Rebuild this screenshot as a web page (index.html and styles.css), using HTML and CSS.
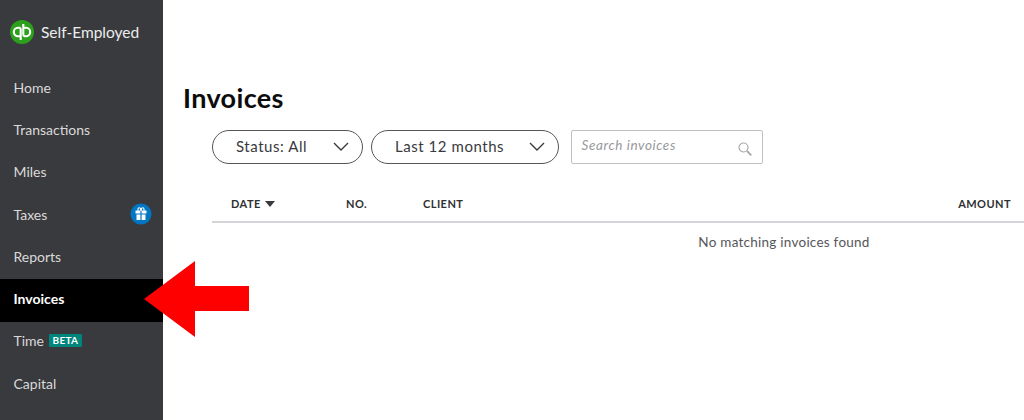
FILE: index.html
```html
<!DOCTYPE html>
<html lang="en">
<head>
    <meta charset="UTF-8">
    <title>Invoices</title>
    <link rel="stylesheet" href="styles.css">
</head>
<body>
    <div class="sidebar">
        <div class="brand">
            <svg class="brand-logo" width="24" height="24" viewBox="0 0 24 24">
                <circle cx="12" cy="12" r="12" fill="#2ca01c"/>
                <g fill="none" stroke="#fff" stroke-width="2.1">
                    <path d="M10.7 16.2H8a4.2 4.2 0 0 1 0-8.4h1.3a1.4 1.4 0 0 1 1.4 1.4V20"/>
                    <path d="M13.3 7.8H16a4.2 4.2 0 0 1 0 8.4h-1.3a1.4 1.4 0 0 1-1.4-1.4V4"/>
                </g>
            </svg>
            <span>Self-Employed</span>
        </div>
        <ul class="nav">
            <li class="nav-item">Home</li>
            <li class="nav-item">Transactions</li>
            <li class="nav-item">Miles</li>
            <li class="nav-item">Taxes
                <svg class="gift" width="22" height="22" viewBox="0 0 22 22">
                    <circle cx="11" cy="11" r="10.5" fill="#0077c5"/>
                    <path d="M5.5 7.6h11v3H5.5zM6.5 11.6h9v5.4h-9z" fill="#fff"/>
                    <path d="M11 7v10.5" stroke="#0077c5" stroke-width="1.2"/>
                    <path d="M8 7.8V6a1.3 1.3 0 0 1 2.6 0v1.8M11.4 7.8V6A1.3 1.3 0 0 1 14 6v1.8" fill="none" stroke="#fff" stroke-width="1.1"/>
                </svg>
            </li>
            <li class="nav-item">Reports</li>
            <li class="nav-item active">Invoices</li>
            <li class="nav-item">Time <span class="beta">BETA</span></li>
            <li class="nav-item">Capital</li>
        </ul>
    </div>

    <div class="main">
        <h1 class="title">Invoices</h1>
        <div class="filters">
            <div class="pill pill-status">
                <span>Status: All</span>
                <svg width="16" height="9" viewBox="0 0 16 9"><path d="M1 1l7 7 7-7" fill="none" stroke="#393a3d" stroke-width="1.4"/></svg>
            </div>
            <div class="pill pill-range">
                <span>Last 12 months</span>
                <svg width="16" height="9" viewBox="0 0 16 9"><path d="M1 1l7 7 7-7" fill="none" stroke="#393a3d" stroke-width="1.4"/></svg>
            </div>
            <div class="search">
                <span>Search invoices</span>
                <svg class="search-icon" width="14" height="14" viewBox="0 0 14 14">
                    <circle cx="5.5" cy="5.5" r="4.5" fill="none" stroke="#a8a9ab" stroke-width="1.2"/>
                    <path d="M9 9l4.3 4.3" stroke="#a8a9ab" stroke-width="1.8"/>
                </svg>
            </div>
        </div>
        <div class="table-head">
            <span class="col-date">DATE <i class="sort"></i></span>
            <span class="col-no">NO.</span>
            <span class="col-client">CLIENT</span>
            <span class="col-amount">AMOUNT</span>
        </div>
        <div class="empty">No matching invoices found</div>
    </div>

    <!-- red arrow lies over the sidebar and the page -->
    <svg class="arrow" width="105" height="76" viewBox="0 0 105 76">
        <path d="M0 38L51 0V25H105V50H51V76z" fill="#fe0000"/>
    </svg>
</body>
</html>
```

FILE: styles.css
```css
html, body {
    height: 100%;
}
body {
    display: flex;
    margin: 0;
    overflow: hidden;
    background-color: #fff;
    font-family: "Lato", "Liberation Sans", sans-serif;
    color: #393a3d;
}
.sidebar {
    flex: 0 0 163px;
    background-color: #393a3d;
    color: #d9d9da;
}
.brand {
    display: flex;
    align-items: center;
    gap: 7px;
    height: 24px;
    padding: 20px 0 0 10px;
    font-size: 15.5px;
    color: #eceded;
}
.nav {
    list-style: none;
    margin: 0;
    padding: 24px 0 0;
}
.nav-item {
    display: flex;
    align-items: center;
    box-sizing: border-box;
    height: 42.3px;
    padding: 0 11px 4px 13.5px;
    font-size: 14px;
}
.nav-item.active {
    background-color: #000;
    color: #fff;
    font-weight: 700;
}
.gift {
    margin: -1px 0 0 auto;
}
.beta {
    margin-left: 5px;
    padding: 0 3.5px;
    height: 13px;
    line-height: 13px;
    background-color: #00867d;
    color: #fff;
    font-size: 10px;
    font-weight: 700;
    letter-spacing: 0.3px;
    border-radius: 1px;
}
.main {
    flex: 1;
    min-width: 0;
    padding-top: 82px;
}
.title {
    margin: 0 0 16px 20px;
    height: 32px;
    line-height: 32px;
    font-size: 27px;
    font-weight: 700;
    color: #0c0c0d;
    letter-spacing: 0.35px;
}
.filters {
    display: flex;
    margin-left: 49px;
    height: 34px;
}
.pill {
    display: flex;
    align-items: center;
    justify-content: space-between;
    box-sizing: border-box;
    border: 1.5px solid #55565a;
    border-radius: 17px;
    padding: 0 13px 0 23px;
    font-size: 15px;
    letter-spacing: 0.55px;
}
.pill span {
    margin-top: -2px;
}
.pill svg {
    margin-top: -1px;
}
.pill-status {
    width: 151px;
}
.pill-range {
    width: 188px;
    margin-left: 8px;
}
.search {
    display: flex;
    align-items: center;
    justify-content: space-between;
    box-sizing: border-box;
    width: 192px;
    margin-left: 12px;
    padding: 0 10px 0 9.5px;
    border: 1px solid #bfc0c2;
    border-radius: 2px;
    font-size: 13.5px;
    font-style: italic;
    color: #97989b;
    letter-spacing: 0.6px;
}
.search span {
    margin-top: -4px;
}
.search-icon {
    margin-top: 4px;
}
.table-head {
    display: flex;
    align-items: center;
    box-sizing: border-box;
    height: 38px;
    margin: 21px 0 0 49px;
    padding: 0 13px 0 19px;
    border-bottom: 2px solid #d4d5d8;
    font-size: 11px;
    font-weight: 700;
    letter-spacing: 0.45px;
    color: #2f3033;
}
.col-date {
    width: 115px;
}
.col-no {
    width: 77px;
}
.col-amount {
    margin-left: auto;
}
.sort {
    display: inline-block;
    margin-left: 1px;
    vertical-align: 1px;
    border-left: 5px solid transparent;
    border-right: 5px solid transparent;
    border-top: 6px solid #393a3d;
}
.empty {
    margin-top: 11px;
    padding-left: 381px;
    text-align: center;
    font-size: 13.5px;
    letter-spacing: 0.25px;
    color: #55565a;
}
.arrow {
    position: absolute;
    left: 144px;
    top: 261px;
}
```
